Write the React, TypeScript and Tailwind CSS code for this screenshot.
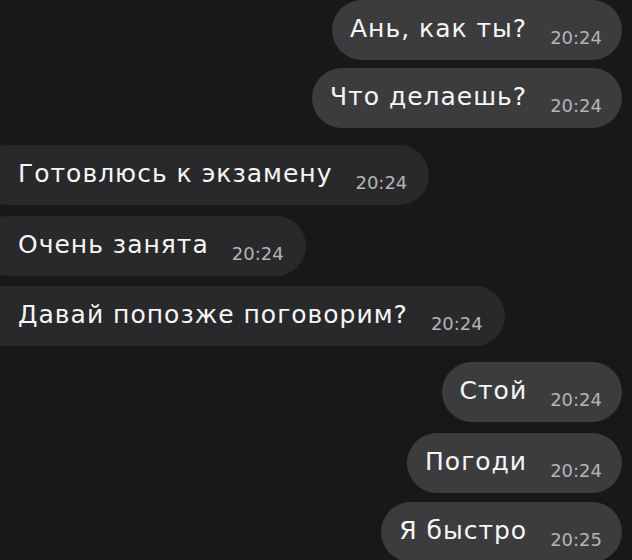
import React from "react";

type Msg = { text: string; time: string; out: boolean; mt: string };

const msgs: Msg[] = [
  { text: "Ань, как ты?", time: "20:24", out: true, mt: "mt-0" },
  { text: "Что делаешь?", time: "20:24", out: true, mt: "mt-[8px]" },
  { text: "Готовлюсь к экзамену", time: "20:24", out: false, mt: "mt-[17px]" },
  { text: "Очень занята", time: "20:24", out: false, mt: "mt-[11px]" },
  { text: "Давай попозже поговорим?", time: "20:24", out: false, mt: "mt-[10px]" },
  { text: "Стой", time: "20:24", out: true, mt: "mt-[16px]" },
  { text: "Погоди", time: "20:24", out: true, mt: "mt-[11px]" },
  { text: "Я быстро", time: "20:25", out: true, mt: "mt-[9px]" },
];

function Bubble({ m }: { m: Msg }) {
  return (
    <div
      className={`flex ${m.out ? "justify-end pr-[10px]" : "justify-start"} ${m.mt}`}
    >
      <div
        className={`flex items-start h-[60px] rounded-full shrink-0 ${
          m.out
            ? "bg-[#3c3c3e] pl-[18px] pr-[20px]"
            : "bg-[#29292b] -ml-[22px] pl-[40px] pr-[22px]"
        }`}
      >
        <span className="mt-[14px] text-[25px] leading-[30px] tracking-[1px] text-[#f6f6f6] whitespace-nowrap">
          {m.text}
        </span>
        <span className="mt-[28px] ml-[23px] text-[18px] leading-[20px] text-[#b4b4b6] whitespace-nowrap">
          {m.time}
        </span>
      </div>
    </div>
  );
}

export default function App() {
  return (
    <div
      className="w-[632px] h-[560px] overflow-hidden bg-[#18181a] flex flex-col"
      style={{ fontFamily: '"DejaVu Sans", "Liberation Sans", sans-serif' }}
    >
      {msgs.map((m, i) => (
        <Bubble key={i} m={m} />
      ))}
    </div>
  );
}
